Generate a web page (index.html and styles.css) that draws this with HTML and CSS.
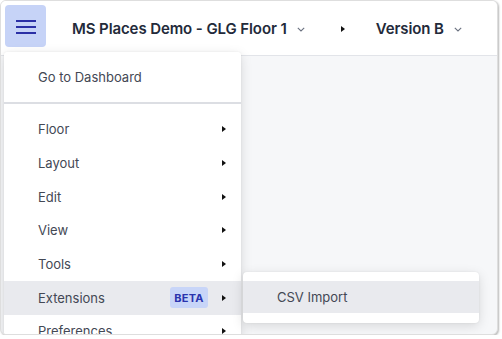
FILE: index.html
```html
<!DOCTYPE html>
<html>
<head>
<meta charset="utf-8">
<link rel="stylesheet" href="styles.css">
</head>
<body>
<div class="frame">
  <header class="header">
    <button class="burger" aria-label="Menu">
      <svg width="20" height="14" viewBox="0 0 20 14"><rect x="0" y="0" width="20" height="2" fill="#2a2fa6"/><rect x="0" y="6" width="20" height="2" fill="#2a2fa6"/><rect x="0" y="12" width="20" height="2" fill="#2a2fa6"/></svg>
    </button>
    <div class="crumb title">MS Places Demo - GLG Floor 1
      <svg class="chev" width="8" height="5" viewBox="0 0 8 5"><path d="M0.8 0.8 L4 4 L7.2 0.8" fill="none" stroke="#6b7280" stroke-width="1.1"/></svg>
    </div>
    <span class="sep-tri"></span>
    <div class="crumb version">Version B
      <svg class="chev" width="8" height="5" viewBox="0 0 8 5"><path d="M0.8 0.8 L4 4 L7.2 0.8" fill="none" stroke="#6b7280" stroke-width="1.1"/></svg>
    </div>
  </header>
  <main class="content"></main>

  <div class="menu">
    <div class="item first">Go to Dashboard</div>
    <div class="divider"></div>
    <div class="item">Floor<span class="tri"></span></div>
    <div class="item">Layout<span class="tri"></span></div>
    <div class="item">Edit<span class="tri"></span></div>
    <div class="item">View<span class="tri"></span></div>
    <div class="item">Tools<span class="tri"></span></div>
    <div class="item active">Extensions<span class="badge">BETA</span><span class="tri"></span></div>
    <div class="item">Preferences<span class="tri"></span></div>
  </div>

  <div class="submenu">
    <div class="subitem">CSV Import</div>
  </div>
</div>
</body>
</html>
```

FILE: styles.css
```css
* { box-sizing: border-box; }
html, body { margin: 0; padding: 0; background: #ffffff; }
body { font-family: Inter, "Noto Sans", "Liberation Sans", sans-serif; }

.frame {
  position: relative;
  width: 498px;
  height: 335px;
  border: 1px solid #dedede;
  border-radius: 6px;
  box-shadow: 1px 1px 2px rgba(0,0,0,0.28);
  overflow: hidden;
  background: #f6f7f9;
  display: flex;
  flex-direction: column;
}

.header {
  height: 55px;
  flex: none;
  background: #ffffff;
  border-bottom: 1px solid #e2e4e9;
  display: flex;
  align-items: center;
  padding-left: 4px;
}

.burger {
  width: 41px;
  height: 42px;
  align-self: flex-start;
  margin-top: 4px;
  border: none;
  border-radius: 4px;
  background: #c6d3f7;
  padding: 0;
  display: flex;
  align-items: center;
  justify-content: center;
}
.burger svg { display: block; margin-left: 1px; margin-top: 1px; }

.crumb {
  display: flex;
  align-items: center;
  font-size: 15px;
  font-weight: 600;
  color: #232a3a;
  letter-spacing: -0.1px;
  margin-top: 1px;
}
.title { margin-left: 26px; }
.chev { margin-left: 10px; margin-top: 2px; }

.sep-tri {
  width: 0; height: 0;
  border-left: 4px solid #111;
  border-top: 3.5px solid transparent;
  border-bottom: 3.5px solid transparent;
  margin-left: 36px;
  margin-top: 1px;
}
.version { margin-left: 31px; }

.content { flex: 1; }

.menu {
  position: absolute;
  left: 3px;
  top: 51px;
  width: 237px;
  height: 300px;
  background: #ffffff;
  border-radius: 3px;
  box-shadow: 0 3px 12px rgba(0,0,0,0.13), 0 0 2px rgba(0,0,0,0.08);
  padding-top: 8px;
}

.item {
  height: 33.7px;
  display: flex;
  align-items: center;
  padding-left: 34px;
  padding-right: 15px;
  font-size: 13px;
  color: #434854;
}
.item.first { height: 33.5px; }
.item.active { background: #e9eaee; }

.divider {
  height: 2px;
  background: #dcdee3;
  margin: 8px 0 9px 0;
}

.tri {
  margin-left: auto;
  width: 0; height: 0;
  border-left: 4px solid #111;
  border-top: 3.5px solid transparent;
  border-bottom: 3.5px solid transparent;
}

.badge {
  margin-left: auto;
  margin-right: 14px;
  width: 38px;
  height: 21px;
  display: flex;
  align-items: center;
  justify-content: center;
  background: #c8d5f8;
  color: #2a33ad;
  font-size: 11px;
  font-weight: 700;
  border-radius: 3px;
  letter-spacing: 0.3px;
}
.badge + .tri { margin-left: 0; }

.submenu {
  position: absolute;
  left: 242px;
  top: 271px;
  width: 236px;
  background: #ffffff;
  border-radius: 4px;
  box-shadow: 0 3px 12px rgba(0,0,0,0.13), 0 0 2px rgba(0,0,0,0.08);
  padding: 9px 0 10px 0;
}
.subitem {
  height: 32px;
  display: flex;
  align-items: center;
  padding-left: 34px;
  background: #e9eaee;
  font-size: 13px;
  color: #434854;
}
```
